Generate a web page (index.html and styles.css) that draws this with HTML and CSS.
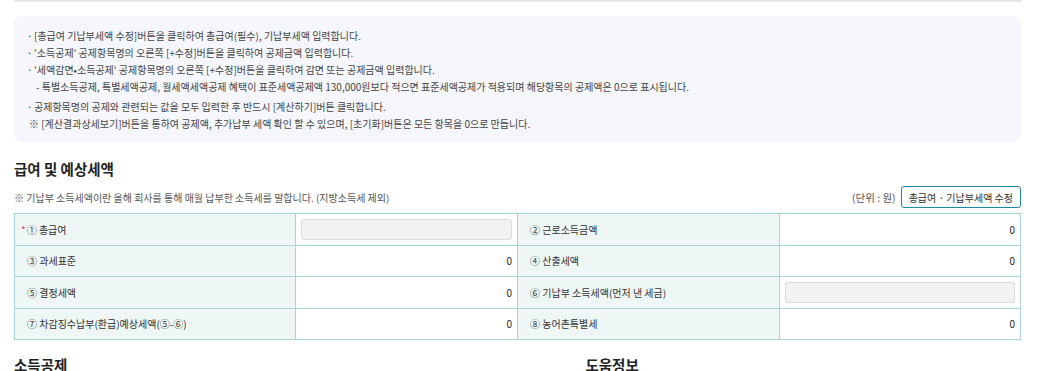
FILE: index.html
```html
<!DOCTYPE html>
<html>
<head>
    <title>연말정산 예상세액 계산</title>
    <link rel="stylesheet" href="styles.css">
</head>
<body>
    <div class="page">
        <div class="topline"></div>

        <div class="guide">
            <ul>
                <li>[총급여 기납부세액 수정]버튼을 클릭하여 총급여(필수), 기납부세액 입력합니다.</li>
                <li>'소득공제' 공제항목명의 오른쪽 [+수정]버튼을 클릭하여 공제금액 입력합니다.</li>
                <li>'세액감면•소득공제' 공제항목명의 오른쪽 [+수정]버튼을 클릭하여 감면 또는 공제금액 입력합니다.
                    <p class="sub">- 특별소득공제, 특별세액공제, 월세액세액공제 혜택이 표준세액공제액 130,000원보다 적으면 표준세액공제가 적용되며 해당항목의 공제액은 0으로 표시됩니다.</p>
                </li>
                <li>공제항목명의 공제와 관련되는 값을 모두 입력한 후 반드시 [계산하기]버튼 클릭합니다.</li>
            </ul>
            <p class="note">※ [계산결과상세보기]버튼을 통하여 공제액, 추가납부 세액 확인 할 수 있으며, [초기화]버튼은 모든 항목을 0으로 만듭니다.</p>
        </div>

        <h2 class="title">급여 및 예상세액</h2>
        <div class="tbl-head">
            <p class="desc">※ 기납부 소득세액이란 올해 회사를 통해 매월 납부한 소득세를 말합니다. (지방소득세 제외)</p>
            <div class="tbl-tools">
                <span class="unit">(단위 : 원)</span>
                <button class="btn-line">총급여 · 기납부세액 수정</button>
            </div>
        </div>

        <table class="tax-table">
            <tr>
                <th><span class="req">*</span>① 총급여</th>
                <td><div class="field"></div></td>
                <th>② 근로소득금액</th>
                <td>0</td>
            </tr>
            <tr>
                <th>③ 과세표준</th>
                <td>0</td>
                <th>④ 산출세액</th>
                <td>0</td>
            </tr>
            <tr>
                <th>⑤ 결정세액</th>
                <td>0</td>
                <th>⑥ 기납부 소득세액(먼저 낸 세금)</th>
                <td><div class="field"></div></td>
            </tr>
            <tr>
                <th>⑦ 차감징수납부(환급)예상세액(⑤-⑥)</th>
                <td>0</td>
                <th>⑧ 농어촌특별세</th>
                <td>0</td>
            </tr>
        </table>

        <div class="bottom">
            <h2 class="title">소득공제</h2>
            <h2 class="title help">도움정보</h2>
        </div>
    </div>
</body>
</html>
```

FILE: styles.css
```css
body {
    margin: 0;
    font-family: "Noto Sans CJK KR", "Noto Sans", sans-serif;
    color: #333;
    background: #fff;
}
.page {
    width: 1007px;
    margin-left: 14px;
}
.topline {
    height: 2px;
    background: #e6e6e6;
}
.guide {
    margin-top: 14px;
    background: #f6f7fc;
    border-radius: 8px;
    padding: 11px 12px 10px 13px;
    font-size: 10px;
    line-height: 17px;
    color: #444;
}
.guide ul {
    list-style: none;
    margin: 0;
    padding: 0;
}
.guide li {
    position: relative;
    padding-left: 7px;
}
.guide li::before {
    content: "·";
    position: absolute;
    left: 0;
}
.guide .sub {
    margin: 0 0 3px 2px;
}
.guide .note {
    margin: 0 0 0 2px;
}
.title {
    margin: 17px 0 0;
    font-size: 14.5px;
    font-weight: bold;
    color: #222;
    line-height: 20px;
}
.tbl-head {
    display: flex;
    justify-content: space-between;
    align-items: center;
    margin-top: 7px;
}
.desc {
    margin: 0;
    font-size: 10px;
    color: #555;
}
.tbl-tools {
    display: flex;
    align-items: center;
    gap: 5px;
}
.unit {
    font-size: 10.5px;
    color: #555;
}
.btn-line {
    font-family: inherit;
    font-size: 10px;
    color: #333;
    background: #fff;
    border: 1px solid #1d8a99;
    border-radius: 3px;
    height: 22px;
    padding: 0 7px;
}
.tax-table {
    width: 100%;
    margin-top: 5px;
    border-collapse: collapse;
    font-size: 10px;
}
.tax-table th,
.tax-table td {
    border: 1px solid #abd3d6;
    height: 30.5px;
    padding: 0 5px;
}
.tax-table th {
    background: #eef7f6;
    font-weight: normal;
    text-align: left;
    padding-left: 12px;
    color: #333;
}
.tax-table th:nth-child(1) { width: 263px; }
.tax-table td:nth-child(2) { width: 211px; }
.tax-table th:nth-child(3) { width: 244px; }
.tax-table td {
    text-align: right;
    color: #222;
}
.req {
    color: #e0436e;
    margin-left: -6px;
    margin-right: 1px;
}
.field {
    height: 19px;
    background: #f2f2f2;
    border: 1px solid #dcdcdc;
    border-radius: 3px;
}
.bottom {
    display: flex;
}
.bottom .title {
    margin-top: 15px;
}
.bottom .help {
    margin-left: 518px;
}
```
